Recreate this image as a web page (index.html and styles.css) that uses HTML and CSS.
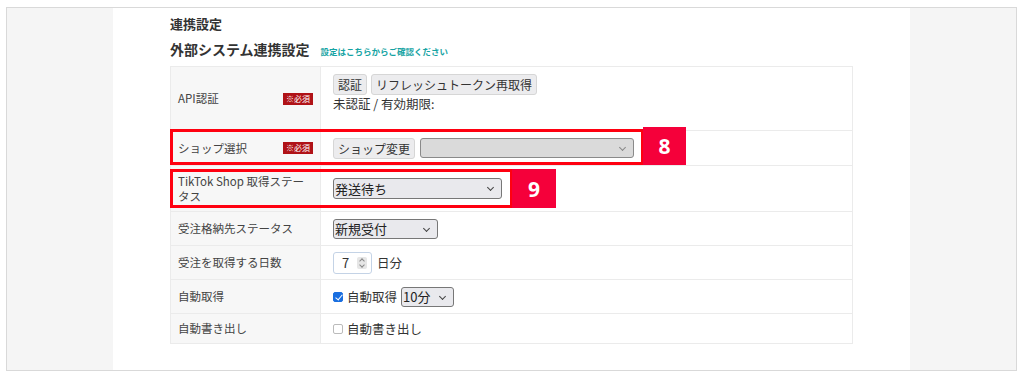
FILE: index.html
```html
<!DOCTYPE html>
<html lang="ja">
<head>
<meta charset="utf-8">
<link rel="stylesheet" href="styles.css">
</head>
<body>
<div class="frame">
  <div class="side"></div>
  <div class="main">
    <h2 class="h1">連携設定</h2>
    <div class="h2row">
      <h3 class="h2">外部システム連携設定</h3>
      <a class="help">設定はこちらからご確認ください</a>
    </div>
    <div class="tablewrap">
      <table class="settings">
        <tr class="r1">
          <th><div class="lab"><span>API認証</span><span class="req">※必須</span></div></th>
          <td>
            <div class="btns"><button class="btn">認証</button><button class="btn">リフレッシュトークン再取得</button></div>
            <div class="status">未認証 / 有効期限:</div>
          </td>
        </tr>
        <tr class="r2">
          <th><div class="lab"><span>ショップ選択</span><span class="req">※必須</span></div></th>
          <td><div class="line"><button class="btn">ショップ変更</button><span class="sel sel-dis"></span></div></td>
        </tr>
        <tr class="r3">
          <th><div class="lab wrap">TikTok Shop 取得ステータス</div></th>
          <td><span class="sel sel-big">発送待ち</span></td>
        </tr>
        <tr class="r4">
          <th><div class="lab">受注格納先ステータス</div></th>
          <td><span class="sel sel-mid">新規受付</span></td>
        </tr>
        <tr class="r5">
          <th><div class="lab">受注を取得する日数</div></th>
          <td><div class="line"><span class="num">7<span class="spin"></span></span><span class="unit">日分</span></div></td>
        </tr>
        <tr class="r6">
          <th><div class="lab">自動取得</div></th>
          <td><div class="line"><span class="cb on"></span><span class="cbl">自動取得</span><span class="sel sel-small">10分</span></div></td>
        </tr>
        <tr class="r7">
          <th><div class="lab">自動書き出し</div></th>
          <td><div class="line"><span class="cb"></span><span class="cbl">自動書き出し</span></div></td>
        </tr>
      </table>
      <div class="mark m8"></div><div class="badge b8">8</div>
      <div class="mark m9"></div><div class="badge b9">9</div>
    </div>
  </div>
  <div class="side"></div>
</div>
</body>
</html>
```
FILE: styles.css
```css
* { box-sizing: border-box; }
html, body { margin: 0; padding: 0; background: #fff; }
body { font-family: "Noto Sans CJK JP", "Noto Sans", sans-serif; color: #333; width: 1024px; height: 376px; overflow: hidden; }
.frame {
  margin: 7px 0 0 6px;
  width: 1011px;
  height: 364px;
  border: 1px solid #d9d9d9;
  display: grid;
  grid-template-columns: 106px 1fr 106px;
}
.side { background: #f5f5f5; }
.main { background: #fff; padding: 7px 0 0 57px; }
.h1 { margin: 0; font-size: 13px; font-weight: bold; color: #333; line-height: 18px; height: 22px; }
.h2row { display: flex; align-items: baseline; gap: 11px; height: 29px; padding-top: 2px; }
.h2 { margin: 0; font-size: 14px; font-weight: bold; line-height: 20px; color: #333; }
.help { font-size: 8.5px; color: #15a3a3; font-weight: bold; }
.tablewrap { position: relative; width: 683px; }
.settings { border-collapse: collapse; width: 683px; table-layout: fixed; }
.settings th, .settings td { border: 1.5px solid #ebebeb; padding: 0; vertical-align: middle; }
.settings th { width: 150px; background: #f7f7f7; font-weight: normal; text-align: left; }
.settings td { background: #fff; padding-left: 12px; font-size: 12.5px; color: #333; }
.settings .r1 td { vertical-align: top; padding-top: 7px; }
.lab { display: flex; justify-content: space-between; align-items: center; font-size: 11.5px; color: #444; padding: 0 7px 0 7px; line-height: 15px; }
.lab.wrap { display: block; padding-right: 10px; }
.req { background: #b01217; color: #fff; font-size: 8px; padding: 1px 3px; line-height: 10px; }
.r1 { height: 64px; }
.r2 { height: 35px; }
.r3 { height: 46px; }
.r4, .r5, .r6 { height: 34px; }
.r7 { height: 30px; }
.btns { display: flex; gap: 4px; }
.btn {
  font-family: inherit; font-size: 12px; color: #333;
  background: #ececee; border: 1px solid #d6d6d6; border-radius: 3px;
  padding: 0 4px; height: 21px; line-height: 19px;
}
.status { font-size: 12.5px; line-height: 16px; margin-top: 1px; }
.line { display: flex; align-items: center; }
.sel {
  position: relative; display: inline-block;
  background: #e9e9ed; border: 1px solid #777; border-radius: 3px;
  font-size: 13px; color: #222; height: 20px; line-height: 18px; padding-left: 1px;
}
.sel::after {
  content: ""; position: absolute; right: 8px; top: 6px;
  width: 4px; height: 4px; border-right: 1px solid #444; border-bottom: 1px solid #444;
  transform: rotate(45deg);
}
.sel-dis { width: 214px; margin-left: 5px; background: #dadada; border-color: #8a8a8a; }
.sel-dis::after { border-color: #888; }
.sel-big { width: 169px; height: 21px; line-height: 19px; }
.sel-mid { width: 105px; }
.sel-small { width: 53px; margin-left: 4px; }
.num {
  position: relative; display: inline-block; width: 39px; height: 22px;
  border: 1px solid #c4d3e6; border-radius: 3px; font-size: 13px; line-height: 20px; padding-left: 8px;
}
.spin { position: absolute; right: 4px; top: 4px; width: 10px; height: 12px; background: #e6e6e6; border-radius: 2px; }
.spin::before { content: ""; position: absolute; left: 3px; top: 2px; width: 3px; height: 3px; border-left: 1px solid #888; border-top: 1px solid #888; transform: rotate(45deg); }
.spin::after { content: ""; position: absolute; left: 3px; top: 6px; width: 3px; height: 3px; border-right: 1px solid #888; border-bottom: 1px solid #888; transform: rotate(45deg); }
.unit { margin-left: 5px; font-size: 12.5px; }
.cb { display: inline-block; width: 10px; height: 10px; border: 1px solid #bbb; border-radius: 2px; background: #fff; position: relative; }
.cb.on { background: #1a6fe0; border-color: #1a6fe0; }
.cb.on::after { content: ""; position: absolute; left: 2.5px; top: 0.5px; width: 3px; height: 6px; border-right: 1.5px solid #fff; border-bottom: 1.5px solid #fff; transform: rotate(40deg); }
.cbl { margin-left: 4px; font-size: 12.5px; }
.mark { position: absolute; border: 3px solid #ff0010; }
.m8 { left: 0; top: 63px; width: 474px; height: 36px; }
.m9 { left: 0; top: 103px; width: 343px; height: 39px; }
.badge { position: absolute; background: #f5003a; color: #fff; font-family: "Open Sans", "Noto Sans", sans-serif; font-weight: bold; font-size: 21px; display: flex; align-items: center; justify-content: center; }
.b8 { left: 473px; top: 61px; width: 43px; height: 38px; }
.b9 { left: 342px; top: 103px; width: 44px; height: 39px; }
```
